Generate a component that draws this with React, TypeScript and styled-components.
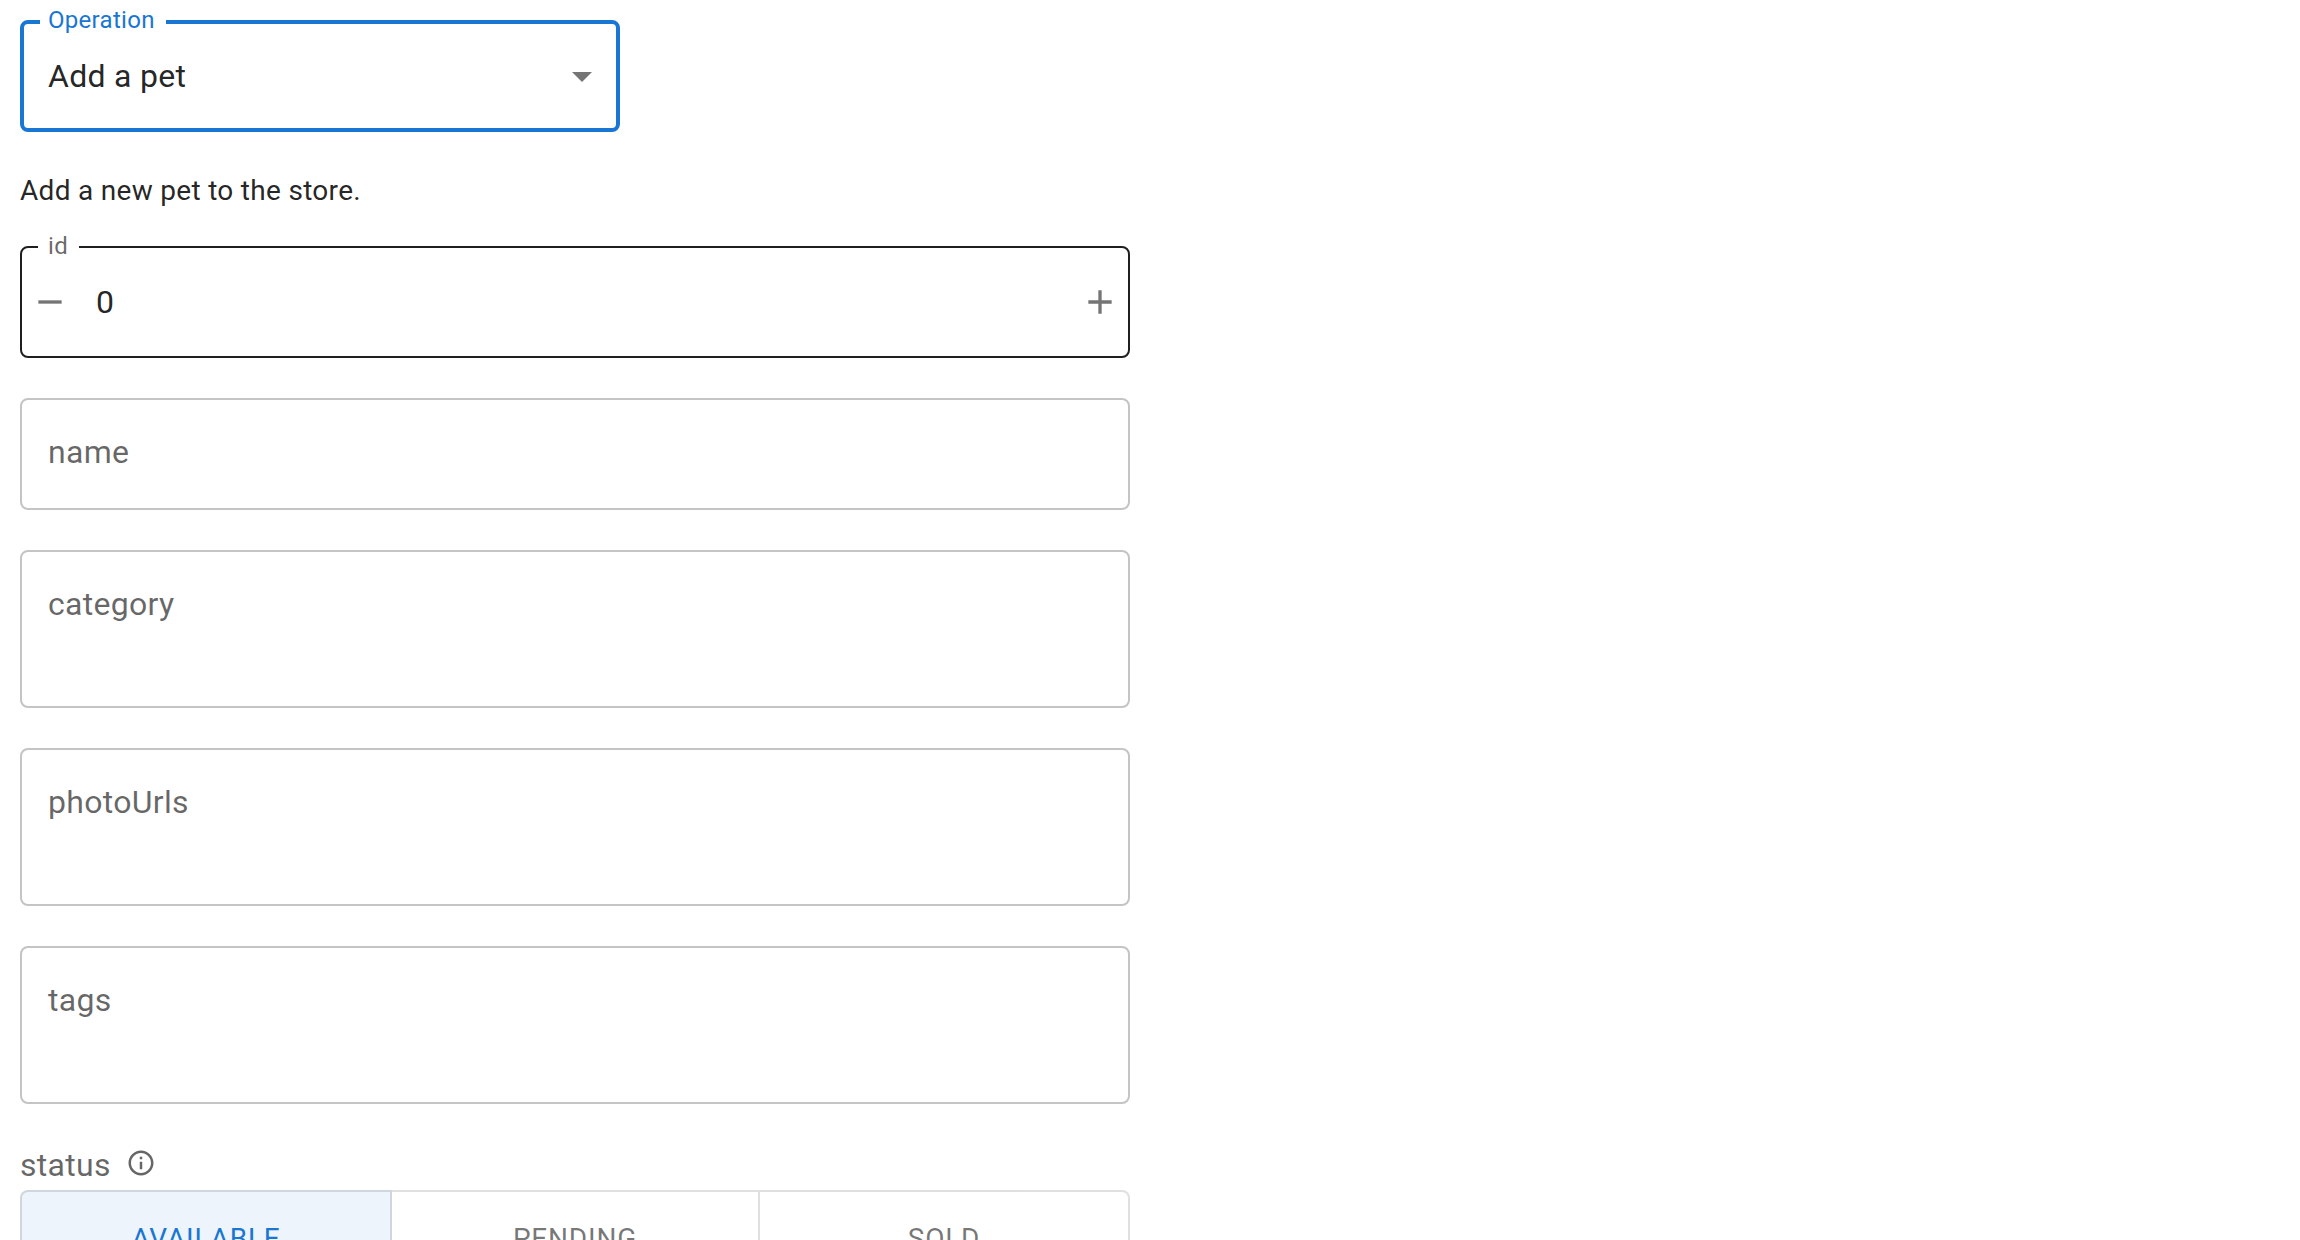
import React from "react";
import styled, { createGlobalStyle } from "styled-components";

const Global = createGlobalStyle`
  html, body { margin: 0; padding: 0; background: #fff; overflow: hidden; height: 1240px; }
  * { box-sizing: border-box; }
`;

const Page = styled.main`
  width: 2300px;
  height: 1240px;
  overflow: hidden;
  padding: 20px;
  font-family: Roboto, "Liberation Sans", sans-serif;
  color: rgba(0, 0, 0, 0.87);
`;

const Form = styled.div`
  width: 1110px;
  display: flex;
  flex-direction: column;
`;

const Fields = styled.div`
  display: flex;
  flex-direction: column;
  gap: 40px;
`;

const Outlined = styled.div<{ $tone: "focus" | "dark" | "idle"; $w?: number; $h: number }>`
  position: relative;
  width: ${(p) => (p.$w ? `${p.$w}px` : "100%")};
  height: ${(p) => p.$h}px;
  border-radius: 8px;
  border: ${(p) =>
    p.$tone === "focus"
      ? "4px solid #1976d2"
      : p.$tone === "dark"
      ? "2px solid #1f1f1f"
      : "2px solid #c4c4c4"};
  background: #fff;
`;

const FloatLabel = styled.span<{ $focus?: boolean }>`
  position: absolute;
  top: ${(p) => (p.$focus ? "-17px" : "-15px")};
  left: 16px;
  padding: 0 11px 0 ${(p) => (p.$focus ? "8px" : "10px")};
  height: 28px;
  line-height: 26px;
  font-size: 24px;
  letter-spacing: 0.3px;
  background: #fff;
  color: ${(p) => (p.$focus ? "#1976d2" : "rgba(0,0,0,0.6)")};
`;

const SelectRow = styled.div`
  height: 100%;
  display: flex;
  align-items: center;
  justify-content: space-between;
  padding: 0 10px 0 24px;
  font-size: 32px;
  letter-spacing: 0.3px;
`;

const Caret = styled.svg`
  width: 48px;
  height: 48px;
  fill: rgba(0, 0, 0, 0.54);
  display: block;
`;

const Description = styled.p`
  margin: 38px 0 34px;
  font-size: 28px;
  line-height: 42px;
  letter-spacing: 0.3px;
  color: rgba(0, 0, 0, 0.87);
`;

const StepperRow = styled.div`
  height: 100%;
  display: flex;
  align-items: center;
  padding: 0 8px;
`;

const StepIcon = styled.svg`
  width: 40px;
  height: 40px;
  fill: rgba(0, 0, 0, 0.54);
  flex: none;
  display: block;
`;

const StepValue = styled.span`
  flex: 1;
  padding-left: 26px;
  font-size: 32px;
  letter-spacing: 0.3px;
`;

const Placeholder = styled.div`
  padding: 16px 26px;
  font-size: 32px;
  line-height: 73px;
  letter-spacing: 0.3px;
  color: rgba(0, 0, 0, 0.6);
`;

const StatusHead = styled.div`
  display: flex;
  align-items: center;
  gap: 15px;
  margin: 37px 0 2px;
  height: 47px;
  font-size: 32px;
  letter-spacing: 0.3px;
  color: rgba(0, 0, 0, 0.6);
`;

const InfoIcon = styled.svg`
  width: 30px;
  height: 30px;
  margin-top: -3px;
  fill: rgba(0, 0, 0, 0.6);
  display: block;
`;

const Toggle = styled.div`
  display: grid;
  grid-template-columns: 372px 368px 370px;
  height: 96px;
`;

const ToggleItem = styled.div<{ $on?: boolean; $pos: "first" | "mid" | "last" }>`
  display: flex;
  align-items: center;
  justify-content: center;
  border: 2px solid rgba(0, 0, 0, 0.12);
  border-left-width: ${(p) => (p.$pos === "first" ? "2px" : "0")};
  border-radius: ${(p) =>
    p.$pos === "first" ? "8px 0 0 8px" : p.$pos === "last" ? "0 8px 8px 0" : "0"};
  background: ${(p) => (p.$on ? "rgba(25,118,210,0.08)" : "#fff")};
  color: ${(p) => (p.$on ? "#1976d2" : "rgba(0,0,0,0.54)")};
  font-size: 28px;
  font-weight: 400;
  letter-spacing: 0.8px;
`;

const fields: [string, number][] = [
  ["name", 112],
  ["category", 158],
  ["photoUrls", 158],
  ["tags", 158],
];

export default function App() {
  return (
    <Page>
      <Global />
      <Form>
        <Outlined $tone="focus" $w={600} $h={112}>
          <FloatLabel $focus>Operation</FloatLabel>
          <SelectRow>
            <span>Add a pet</span>
            <Caret viewBox="0 0 24 24">
              <path d="M7 10l5 5 5-5z" />
            </Caret>
          </SelectRow>
        </Outlined>
        <Description>Add a new pet to the store.</Description>
        <Fields>
          <Outlined $tone="dark" $h={112}>
            <FloatLabel>id</FloatLabel>
            <StepperRow>
              <StepIcon viewBox="0 0 24 24">
                <path d="M19 13H5v-2h14v2z" />
              </StepIcon>
              <StepValue>0</StepValue>
              <StepIcon viewBox="0 0 24 24">
                <path d="M19 13h-6v6h-2v-6H5v-2h6V5h2v6h6v2z" />
              </StepIcon>
            </StepperRow>
          </Outlined>
          {fields.map(([label, h]) => (
            <Outlined key={label} $tone="idle" $h={h}>
              <Placeholder>{label}</Placeholder>
            </Outlined>
          ))}
        </Fields>
        <StatusHead>
          <span>status</span>
          <InfoIcon viewBox="0 0 24 24">
            <path d="M11 7h2v2h-2zm0 4h2v6h-2zm1-9C6.48 2 2 6.48 2 12s4.48 10 10 10 10-4.48 10-10S17.52 2 12 2zm0 18c-4.41 0-8-3.59-8-8s3.59-8 8-8 8 3.59 8 8-3.59 8-8 8z" />
          </InfoIcon>
        </StatusHead>
        <Toggle>
          <ToggleItem $on $pos="first">AVAILABLE</ToggleItem>
          <ToggleItem $pos="mid">PENDING</ToggleItem>
          <ToggleItem $pos="last">SOLD</ToggleItem>
        </Toggle>
      </Form>
    </Page>
  );
}
